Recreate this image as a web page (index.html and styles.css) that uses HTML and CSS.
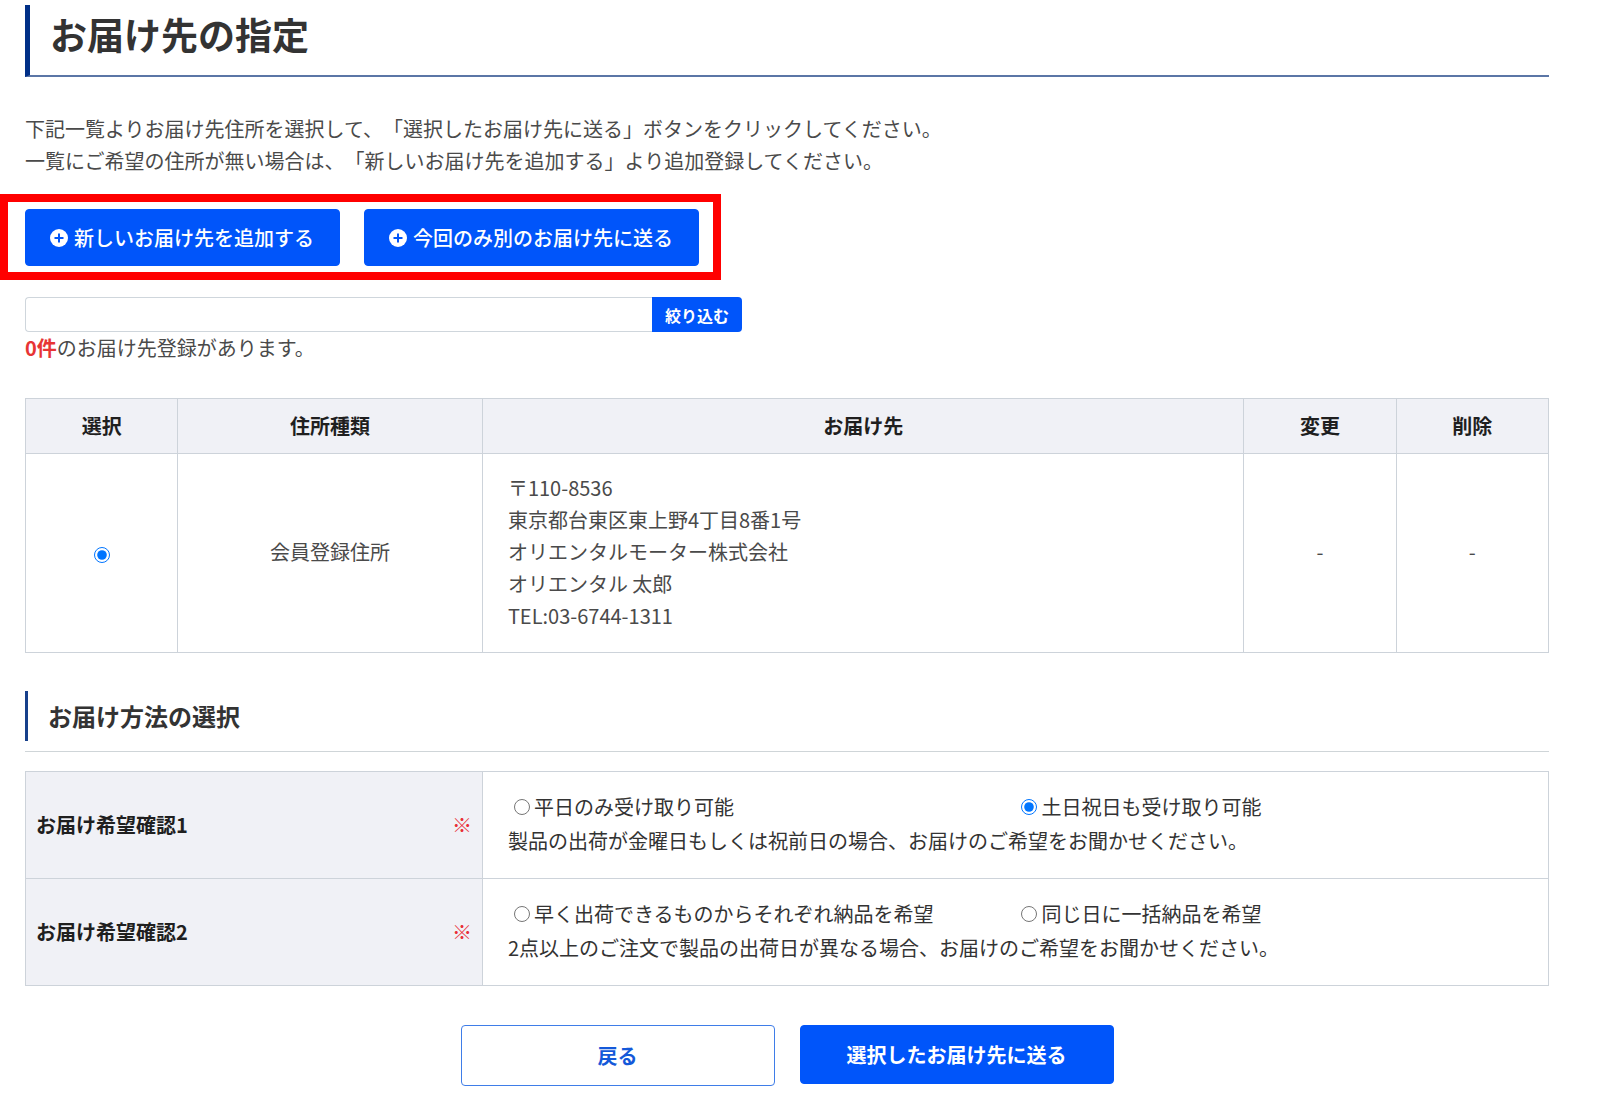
FILE: index.html
```html
<!DOCTYPE html>
<html lang="ja">
<head>
<meta charset="utf-8">
<meta name="viewport" content="width=device-width, initial-scale=1">
<title>お届け先の指定</title>
<link rel="stylesheet" href="styles.css">
</head>
<body>
<main class="page">
  <h1 class="page-title">お届け先の指定</h1>
  <p class="lead">下記一覧よりお届け先住所を選択して、「選択したお届け先に送る」ボタンをクリックしてください。<br>一覧にご希望の住所が無い場合は、「新しいお届け先を追加する」より追加登録してください。</p>

  <div class="add-actions">
    <button type="button" class="button button-add">
      <svg class="icon" viewBox="0 0 18 18" aria-hidden="true"><circle cx="9" cy="9" r="9" fill="#fff"/><path d="M9 4.5v9M4.5 9h9" stroke="#0055fa" stroke-width="2"/></svg>
      新しいお届け先を追加する
    </button>
    <button type="button" class="button button-add">
      <svg class="icon" viewBox="0 0 18 18" aria-hidden="true"><circle cx="9" cy="9" r="9" fill="#fff"/><path d="M9 4.5v9M4.5 9h9" stroke="#0055fa" stroke-width="2"/></svg>
      今回のみ別のお届け先に送る
    </button>
  </div>

  <form class="filter">
    <input type="text" class="filter-input" aria-label="お届け先の絞り込み">
    <button type="button" class="filter-button">絞り込む</button>
  </form>
  <p class="count"><strong class="count-number">0件</strong>のお届け先登録があります。</p>

  <table class="table address-table">
    <colgroup>
      <col class="col-narrow"><col class="col-type"><col class="col-address"><col class="col-narrow"><col class="col-narrow">
    </colgroup>
    <thead>
      <tr><th scope="col">選択</th><th scope="col">住所種類</th><th scope="col">お届け先</th><th scope="col">変更</th><th scope="col">削除</th></tr>
    </thead>
    <tbody>
      <tr>
        <td><input type="radio" class="radio" name="address" id="address-1" checked></td>
        <td><label for="address-1">会員登録住所</label></td>
        <td class="address">〒110-8536<br>東京都台東区東上野4丁目8番1号<br>オリエンタルモーター株式会社<br>オリエンタル 太郎<br>TEL:03-6744-1311</td>
        <td>-</td>
        <td>-</td>
      </tr>
    </tbody>
  </table>

  <h2 class="section-title"><span class="section-title-text">お届け方法の選択</span></h2>

  <table class="table method-table">
    <colgroup><col class="col-question"><col></colgroup>
    <tbody>
      <tr>
        <th scope="row"><div class="question">お届け希望確認1<span class="required">※</span></div></th>
        <td>
          <div class="options">
            <label class="option"><input type="radio" class="radio" name="receive">平日のみ受け取り可能</label>
            <label class="option"><input type="radio" class="radio" name="receive" checked>土日祝日も受け取り可能</label>
          </div>
          <p class="note">製品の出荷が金曜日もしくは祝前日の場合、お届けのご希望をお聞かせください。</p>
        </td>
      </tr>
      <tr>
        <th scope="row"><div class="question">お届け希望確認2<span class="required">※</span></div></th>
        <td>
          <div class="options">
            <label class="option"><input type="radio" class="radio" name="delivery">早く出荷できるものからそれぞれ納品を希望</label>
            <label class="option"><input type="radio" class="radio" name="delivery">同じ日に一括納品を希望</label>
          </div>
          <p class="note">2点以上のご注文で製品の出荷日が異なる場合、お届けのご希望をお聞かせください。</p>
        </td>
      </tr>
    </tbody>
  </table>

  <div class="form-actions">
    <button type="button" class="button button-back">戻る</button>
    <button type="submit" class="button button-submit">選択したお届け先に送る</button>
  </div>
</main>
</body>
</html>
```
FILE: styles.css
```css
* {
  box-sizing: border-box;
}

body {
  margin: 0;
  background: #fff;
  color: #4a4a4a;
  font-family: "Noto Sans CJK JP", sans-serif;
  font-size: 20px;
  line-height: 32px;
  text-spacing-trim: space-all;
}

h1, h2, p {
  margin: 0;
}

button, input {
  margin: 0;
  font: inherit;
}

.page {
  padding: 5px 51px 10px 25px;
}

.page-title {
  padding: 5px 20px 17px;
  border-bottom: 2px solid #5b76a6;
  border-left: 5px solid #002f87;
  color: #333;
  font-size: 37px;
  line-height: 48px;
}

.lead {
  margin-top: 36px;
}

.add-actions {
  display: flex;
  gap: 24px;
  width: fit-content;
  margin: 17px 0 17px -25px;
  padding: 7px 14px 6px 17px;
  border: 8px solid #f00;
}

.button {
  border: 1px solid #0055fa;
  border-radius: 4px;
  background: #0055fa;
  color: #fff;
  cursor: pointer;
}

.button-add {
  display: flex;
  align-items: center;
  gap: 6px;
  height: 57px;
  padding: 0 25px 0 24px;
  font-weight: 500;
}

.icon {
  width: 18px;
  height: 18px;
}

.filter {
  display: flex;
  width: 717px;
  max-width: 100%;
}

.filter-input {
  flex: 1;
  min-width: 0;
  height: 35px;
  padding: 0 10px;
  border: 1px solid #cfd6dc;
  border-right: 0;
  border-radius: 4px 0 0 4px;
}

.filter-button {
  width: 90px;
  height: 35px;
  padding: 0;
  border: 0;
  border-radius: 0 4px 4px 0;
  background: #0055fa;
  color: #fff;
  font-size: 16px;
  font-weight: 700;
}

.count-number {
  color: #e73434;
}

.table {
  width: 100%;
  border-collapse: collapse;
  table-layout: fixed;
}

.table th,
.table td {
  border: 1px solid #cdd3da;
}

.table th {
  background: #f0f1f6;
  color: #1f1f1f;
  font-weight: 700;
}

.address-table {
  margin-top: 34px;
}

.address-table th {
  padding: 11px 10px;
}

.address-table td {
  padding: 18px 25px 20px;
  text-align: center;
}

.address-table .address {
  text-align: left;
}

.col-narrow {
  width: 10%;
}

.col-type {
  width: 20%;
}

.col-address {
  width: 50%;
}

.col-question {
  width: 30%;
}

.radio {
  width: 16px;
  height: 16px;
  vertical-align: middle;
}

.section-title {
  margin-top: 38px;
  padding-bottom: 10px;
  border-bottom: 1px solid #cfd5d8;
  color: #333;
  font-size: 24px;
}

.section-title-text {
  display: block;
  padding: 9px 20px;
  border-left: 3px solid #17408b;
}

.method-table {
  margin-top: 19px;
}

.method-table th {
  padding: 0 10px;
  text-align: left;
}

.method-table td {
  padding: 19px 25px 21px;
  color: #333;
}

.question {
  display: flex;
  justify-content: space-between;
}

.required {
  color: #e92f36;
  font-weight: 400;
}

.options {
  display: grid;
  grid-template-columns: 1fr 1fr;
}

.option {
  display: flex;
  align-items: center;
  gap: 4px;
  padding-left: 6px;
}

.note {
  padding-top: 2px;
}

.form-actions {
  display: flex;
  align-items: flex-start;
  justify-content: center;
  gap: 25px;
  margin-top: 39px;
}

.button-back,
.button-submit {
  width: 314px;
  height: 59px;
  font-weight: 700;
}

.button-back {
  height: 61px;
  border-color: #3f7de8;
  background: #fff;
  color: #1459d9;
}
```
